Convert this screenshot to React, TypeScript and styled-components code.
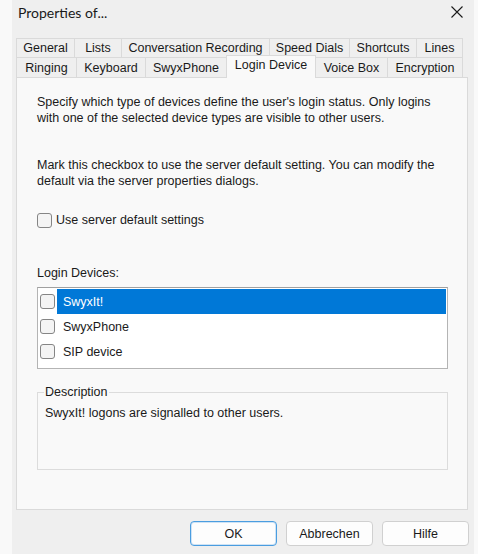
import React from "react";
import styled, { createGlobalStyle } from "styled-components";

interface Tab {
    label: string;
    width: number;
}

const firstRow: Tab[] = [
    { label: "General", width: 59 },
    { label: "Lists", width: 48 },
    { label: "Conversation Recording", width: 149 },
    { label: "Speed Dials", width: 81 },
    { label: "Shortcuts", width: 68 },
    { label: "Lines", width: 47 },
];

const secondRow: Tab[] = [
    { label: "Ringing", width: 61 },
    { label: "Keyboard", width: 70 },
    { label: "SwyxPhone", width: 82 },
    { label: "Login Device", width: 90 },
    { label: "Voice Box", width: 73 },
    { label: "Encryption", width: 76 },
];

const devices = ["SwyxIt!", "SwyxPhone", "SIP device"];

const App: React.FC = () => {
    const active = "Login Device";

    return (
        <>
            <GlobalStyle />
            <Dialog>
                <TitleBar>
                    <Title>Properties of...</Title>
                    <CloseButton aria-label="Close">
                        <svg width="12" height="12" viewBox="0 0 12 12">
                            <path d="M0.5 0.5 L11.5 11.5 M11.5 0.5 L0.5 11.5" stroke="#1a1a1a" strokeWidth="1.1" fill="none" />
                        </svg>
                    </CloseButton>
                </TitleBar>

                <Body>
                    <TabStrip>
                        <TabRow>
                            {firstRow.map((t) => (
                                <TabItem key={t.label} $w={t.width} $active={t.label === active}>
                                    {t.label}
                                </TabItem>
                            ))}
                        </TabRow>
                        <TabRow>
                            {secondRow.map((t) => (
                                <TabItem key={t.label} $w={t.width} $active={t.label === active}>
                                    {t.label}
                                </TabItem>
                            ))}
                        </TabRow>
                    </TabStrip>

                    <Panel>
                        <Paragraph>
                            Specify which type of devices define the user's login status. Only logins
                            with one of the selected device types are visible to other users.
                        </Paragraph>
                        <Paragraph $top={31}>
                            Mark this checkbox to use the server default setting. You can modify the
                            default via the server properties dialogs.
                        </Paragraph>

                        <CheckRow>
                            <CheckBox />
                            <span>Use server default settings</span>
                        </CheckRow>

                        <ListLabel>Login Devices:</ListLabel>
                        <DeviceList>
                            {devices.map((d, i) => (
                                <DeviceRow key={d}>
                                    <CheckBox />
                                    <DeviceName $selected={i === 0}>{d}</DeviceName>
                                </DeviceRow>
                            ))}
                        </DeviceList>

                        <Group>
                            <Legend>Description</Legend>
                            <GroupText>SwyxIt! logons are signalled to other users.</GroupText>
                        </Group>
                    </Panel>

                    <ButtonBar>
                        <Button $default>OK</Button>
                        <Button>Abbrechen</Button>
                        <Button>Hilfe</Button>
                    </ButtonBar>
                </Body>
            </Dialog>
        </>
    );
};

const GlobalStyle = createGlobalStyle`
    html, body {
        margin: 0;
        padding: 0;
        background: #f9f9f9;
    }
    body {
        font-family: "Liberation Sans", Arial, sans-serif;
        font-size: 12.5px;
        color: #1a1a1a;
    }
`;

const Dialog = styled.div`
    margin-left: 12px;
    width: 462px;
    height: 554px;
    background: #efefef;
    display: flex;
    flex-direction: column;
    overflow: hidden;
`;

const TitleBar = styled.div`
    height: 30px;
    display: flex;
    align-items: center;
    justify-content: space-between;
    padding: 0 11px 0 6px;
    box-sizing: border-box;
`;

const Title = styled.div`
    font-family: Lato, "Noto Sans", sans-serif;
    font-size: 14px;
    color: #1a1a1a;
    margin-top: -5px;
`;

const CloseButton = styled.div`
    display: flex;
    align-items: center;
    margin-top: -6px;
`;

const Body = styled.div`
    padding: 8px 6px 0 4px;
    display: flex;
    flex-direction: column;
`;

const TabStrip = styled.div`
    display: flex;
    flex-direction: column;
    position: relative;
    z-index: 1;
`;

const TabRow = styled.div`
    display: flex;
    height: 20px;
    &:first-child {
        height: 19px;
    }
`;

const TabItem = styled.div<{ $w: number; $active?: boolean }>`
    width: ${(p) => p.$w}px;
    box-sizing: border-box;
    display: flex;
    align-items: center;
    justify-content: center;
    font-size: 12.5px;
    color: #1a1a1a;
    border: 1px solid #dadada;
    border-bottom: none;
    margin-left: -1px;
    &:first-child {
        margin-left: 0;
    }
    background: ${(p) => (p.$active ? "#f9f9f9" : "#efefef")};
    ${(p) =>
        p.$active &&
        `
        margin-top: -2px;
        height: 23px;
        padding-bottom: 4px;
        position: relative;
        z-index: 2;
    `}
`;

const Panel = styled.div`
    height: 433px;
    box-sizing: border-box;
    background: #f9f9f9;
    border: 1px solid #dadada;
    padding: 16px 19px 0 20px;
    display: flex;
    flex-direction: column;
`;

const Paragraph = styled.p<{ $top?: number }>`
    margin: ${(p) => p.$top ?? 0}px 0 0 0;
    line-height: 16px;
    width: 412px;
`;

const CheckRow = styled.label`
    display: flex;
    align-items: center;
    gap: 4px;
    margin-top: 23px;
    height: 16px;
`;

const CheckBox = styled.span`
    display: inline-block;
    width: 15px;
    height: 15px;
    box-sizing: border-box;
    border: 1px solid #858585;
    border-radius: 3px;
    background: #f4f4f4;
    flex-shrink: 0;
`;

const ListLabel = styled.div`
    margin-top: 37px;
    line-height: 16px;
`;

const DeviceList = styled.div`
    margin-top: 6px;
    width: 411px;
    height: 82px;
    box-sizing: border-box;
    background: #ffffff;
    border: 1px solid #b4b4b4;
    border-top-color: #a0a0a0;
    padding: 1px 1px 0 2px;
`;

const DeviceRow = styled.div`
    display: flex;
    align-items: center;
    height: 25px;
    gap: 2px;
`;

const DeviceName = styled.div<{ $selected?: boolean }>`
    flex: 1;
    height: 100%;
    display: flex;
    align-items: center;
    padding-left: 6px;
    background: ${(p) => (p.$selected ? "#0078d7" : "transparent")};
    color: ${(p) => (p.$selected ? "#ffffff" : "#1a1a1a")};
`;

const Group = styled.fieldset`
    margin: 15px 0 0 0;
    width: 411px;
    height: 86px;
    box-sizing: border-box;
    border: 1px solid #dcdcdc;
    padding: 0 7px;
`;

const Legend = styled.legend`
    padding: 0 1px;
    line-height: 16px;
    margin-left: -1px;
`;

const GroupText = styled.div`
    margin-top: 5px;
    line-height: 16px;
`;

const ButtonBar = styled.div`
    display: flex;
    justify-content: flex-end;
    gap: 9px;
    margin-top: 11px;
    margin-right: -1px;
`;

const Button = styled.div<{ $default?: boolean }>`
    width: 87px;
    height: 25px;
    box-sizing: border-box;
    display: flex;
    align-items: center;
    justify-content: center;
    background: #fdfdfd;
    border: 1px solid ${(p) => (p.$default ? "#4a9de0" : "#d0d0d0")};
    ${(p) => p.$default && "box-shadow: inset 0 0 0 1px #cfe3f5;"}
    border-radius: 4px;
    font-size: 12.5px;
    color: #1a1a1a;
`;

export default App;
